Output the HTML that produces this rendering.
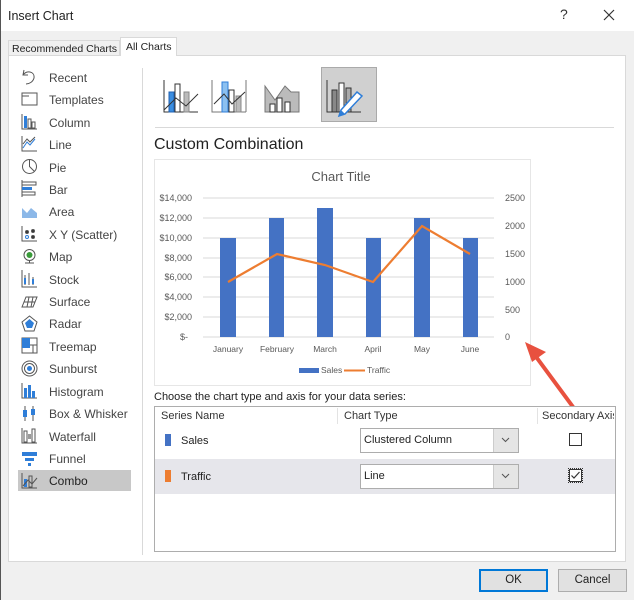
<!DOCTYPE html>
<html><head><style>
*{box-sizing:border-box;margin:0;padding:0}
body{width:634px;height:600px;overflow:hidden;font-family:"Liberation Sans",sans-serif;background:#f0f0f0;position:relative;color:#222}
.a{position:absolute;white-space:nowrap}
.t{font-size:12px}
</style></head><body>
<div class="a" style="left:0;top:0;width:634px;height:31px;background:#fff"></div>
<div class="a t" style="left:8px;top:9px;font-size:12.5px">Insert Chart</div>
<div class="a" style="left:560px;top:6px;font-size:14px;color:#333">?</div>
<svg class="a" style="left:603px;top:9px" width="12" height="12"><path d="M1 1L11 11M11 1L1 11" stroke="#333" stroke-width="1.2"/></svg>
<div class="a" style="left:0;top:0;width:1px;height:600px;background:#555"></div>
<!-- tabs -->
<div class="a" style="left:8px;top:40px;width:112px;height:16px;border:1px solid #d9d9d9;border-bottom:none;background:#f0f0f0;font-size:10.5px;padding:2px 3px;overflow:hidden">Recommended Charts</div>
<div class="a" style="left:120px;top:37px;width:57px;height:19px;border:1px solid #d9d9d9;border-bottom:none;background:#fff;font-size:10.5px;padding:3px 5px;overflow:hidden">All Charts</div>
<div class="a" style="left:8px;top:55px;width:618px;height:507px;background:#fff;border:1px solid #d9d9d9"></div>
<div class="a" style="left:121px;top:55px;width:55px;height:2px;background:#fff"></div>
<!-- left list -->
<div class="a" style="left:18px;top:470px;width:113px;height:21px;background:#c8c8c8"></div>
<div class="a" style="left:142px;top:68px;width:1px;height:487px;background:#d9d9d9"></div>
<div class="a" style="left:49px;top:67px;font-size:12px;line-height:22.4px;color:#444">
Recent<br>Templates<br>Column<br>Line<br>Pie<br>Bar<br>Area<br>X Y (Scatter)<br>Map<br>Stock<br>Surface<br>Radar<br>Treemap<br>Sunburst<br>Histogram<br>Box &amp; Whisker<br>Waterfall<br>Funnel<br><span style="color:#222">Combo</span></div>
<svg class="a" style="left:20px;top:67px" width="20" height="424" fill="none" stroke="#555" stroke-width="1">
<path d="M4 3L3 8L8 8M3 8C6 3 15 4 14 11C13 15 9 17 6 17"/>
<rect x="2" y="26" width="15" height="12"/><path d="M2 29H9"/>
<g transform="translate(0,45)"><path d="M2 2V17H17"/><rect x="4" y="4" width="3" height="12" fill="#2f7ed8" stroke="none"/><rect x="8" y="7" width="3" height="9"/><rect x="12" y="10" width="3" height="6"/></g>
<g transform="translate(0,67)"><path d="M2 2V17H17"/><path d="M3 14L7 8L10 11L15 5" stroke="#2f7ed8"/><path d="M3 10L7 5L10 8L15 3"/></g>
<g transform="translate(0,90)"><circle cx="9.5" cy="9.5" r="7"/><path d="M9.5 2.5V9.5L14.5 14.5"/></g>
<g transform="translate(0,112)"><path d="M2 1V18"/><rect x="2" y="3" width="14" height="3"/><rect x="2" y="8" width="10" height="3" fill="#2f7ed8" stroke="none"/><rect x="2" y="13" width="13" height="3"/></g>
<g transform="translate(0,135)"><path d="M2 6L7 11L11 6L17 11V16H2Z" fill="#8cb8e8" stroke="none"/></g>
<g transform="translate(0,157)"><path d="M2 2V17H17" stroke="#555"/><circle cx="7" cy="8" r="1.5" fill="#333"/><circle cx="13" cy="7" r="1.5" fill="#333"/><circle cx="7" cy="13" r="1.5" stroke="#2f7ed8"/><circle cx="13" cy="13" r="1.5" fill="#333"/></g>
<g transform="translate(0,180)"><circle cx="9.5" cy="8" r="5.5"/><circle cx="9.5" cy="8" r="3" fill="#3a9b3a" stroke="none"/><path d="M5 16H14M9.5 14V16"/></g>
<g transform="translate(0,202)"><path d="M2 1V18H17M5 6V16M9 4V16M13 8V16"/><rect x="4" y="9" width="2" height="6" fill="#2f7ed8" stroke="none"/><rect x="12" y="10" width="2" height="5" fill="#2f7ed8" stroke="none"/></g>
<g transform="translate(0,224)"><path d="M2 16L6 6H17L13 16Z M4 11H15 M9 6L7 16 M13 6L11 16"/></g>
<g transform="translate(0,247)"><path d="M9.5 2L17 8L14 17H5L2 8Z" /><path d="M9.5 5L14 9L12 14H7L5 9Z" fill="#2f7ed8" stroke="none"/></g>
<g transform="translate(0,269)"><rect x="2" y="2" width="15" height="15"/><rect x="2" y="2" width="8" height="10" fill="#2f7ed8" stroke="none"/><path d="M10 9H17M13 9V17"/></g>
<g transform="translate(0,292)"><circle cx="9.5" cy="9.5" r="7.5"/><circle cx="9.5" cy="9.5" r="5"/><circle cx="9.5" cy="9.5" r="2.5" fill="#2f7ed8" stroke="none"/></g>
<g transform="translate(0,314)"><path d="M2 2V17H17"/><rect x="4" y="7" width="3" height="10" fill="#2f7ed8" stroke="none"/><rect x="8" y="4" width="3" height="13" fill="#2f7ed8" stroke="none"/><rect x="12" y="10" width="3" height="7" fill="#2f7ed8" stroke="none"/></g>
<g transform="translate(0,337)"><path d="M5 2V17M13 2V17"/><rect x="3" y="6" width="4" height="7" fill="#2f7ed8" stroke="none"/><rect x="11" y="5" width="4" height="6" fill="#2f7ed8" stroke="none"/></g>
<g transform="translate(0,359)"><path d="M2 2V17H17"/><rect x="4" y="5" width="3" height="11"/><rect x="8" y="8" width="3" height="5" fill="#999" stroke="none"/><rect x="12" y="3" width="3" height="13"/></g>
<g transform="translate(0,382)"><path d="M2 3H17V7H2Z M5 9H14V12H5Z M8 14H11V17H8Z" fill="#2f7ed8" stroke="none"/></g>
<g transform="translate(0,404)"><path d="M2 2V17H17"/><rect x="4" y="8" width="3" height="8" fill="#2f7ed8" stroke="none"/><rect x="9" y="5" width="3" height="11"/><path d="M3 15L8 9L12 13L17 7"/></g>
</svg>
<!-- chart type icons -->
<div class="a" style="left:321px;top:67px;width:56px;height:55px;background:#d0d0d0;border:1px solid #aaa"></div>
<svg class="a" style="left:155px;top:70px" width="225" height="50" fill="none" stroke="#333" stroke-width="1">
<g transform="translate(9,10)"><path d="M0 0V32H34"/><rect x="5" y="12" width="5" height="20" fill="#3a8de0" stroke="#2060b0"/><rect x="11" y="4" width="5" height="28"/><rect x="20" y="12" width="5" height="20" fill="#bbb" stroke="#888"/><path d="M0 30L12 18L22 26L34 14"/></g>
<g transform="translate(57,10)"><path d="M0 0V32H34M34 0V32" stroke="#777"/><rect x="10" y="2" width="6" height="30" fill="#8cc0f0" stroke="#2f7ed8"/><rect x="17" y="10" width="5" height="22"/><rect x="24" y="16" width="5" height="16" fill="#bbb" stroke="#888"/><path d="M2 24L12 14L20 24L33 12"/></g>
<g transform="translate(110,10)"><path d="M0 6L10 20L20 6L26 12H34V32H0Z" fill="#bbb" stroke="#777"/><rect x="5" y="24" width="5" height="8" fill="#fff"/><rect x="12" y="18" width="5" height="14" fill="#fff"/><rect x="20" y="22" width="5" height="10" fill="#fff"/></g>
<g transform="translate(172,10)"><path d="M0 0V32H34"/><rect x="5" y="10" width="5" height="22" fill="#888"/><rect x="12" y="3" width="5" height="29" fill="#fff"/><rect x="19" y="8" width="5" height="24" fill="#aaa"/><path d="M14 30L30 12L35 16L18 34L12 36Z" fill="#fff" stroke="#2f7ed8" stroke-width="1.5"/><path d="M12 36L14 30L18 34Z" fill="#2f7ed8" stroke="none"/></g>
</svg>
<div class="a" style="left:155px;top:127px;width:459px;height:1px;background:#d9d9d9"></div>
<div class="a" style="left:154px;top:136px;font-size:16px;color:#222">Custom Combination</div>
<!-- chart -->
<div class="a" style="left:154px;top:159px;width:377px;height:227px;border:1px solid #e6e6e6;background:#fff"></div>
<svg class="a" style="left:154px;top:159px" width="377" height="227" font-family="Liberation Sans,sans-serif" font-size="9" fill="#595959">
<text x="187" y="22" font-size="13" text-anchor="middle">Chart Title</text>
<g stroke="#d9d9d9" stroke-width="1">
<path d="M49 39H340M49 59H340M49 79H340M49 99H340M49 118H340M49 138H340M49 158H340M49 178H340"/></g>
<g text-anchor="end"><text x="38" y="42">$14,000</text><text x="38" y="62">$12,000</text><text x="38" y="82">$10,000</text><text x="38" y="102">$8,000</text><text x="38" y="121">$6,000</text><text x="38" y="141">$4,000</text><text x="38" y="161">$2,000</text><text x="34" y="181">$-</text></g>
<g><text x="351" y="42">2500</text><text x="351" y="70">2000</text><text x="351" y="98">1500</text><text x="351" y="126">1000</text><text x="351" y="154">500</text><text x="351" y="181">0</text></g>
<g fill="#4472c4"><rect x="66" y="79" width="16" height="99"/><rect x="115" y="59" width="15" height="119"/><rect x="163" y="49" width="16" height="129"/><rect x="212" y="79" width="15" height="99"/><rect x="260" y="59" width="16" height="119"/><rect x="309" y="79" width="15" height="99"/></g>
<path d="M74 123L123 95L171 106L219 123L268 67L316 95" fill="none" stroke="#ed7d31" stroke-width="2.2"/>
<g text-anchor="middle" font-size="8.5"><text x="74" y="193">January</text><text x="123" y="193">February</text><text x="171" y="193">March</text><text x="219" y="193">April</text><text x="268" y="193">May</text><text x="316" y="193">June</text></g>
<rect x="145" y="209" width="20" height="5" fill="#4472c4"/><text x="167" y="214" font-size="8.5">Sales</text>
<path d="M190 211.5H211" stroke="#ed7d31" stroke-width="2"/><text x="213" y="214" font-size="8.5">Traffic</text>
</svg>
<!-- arrow -->
<svg class="a" style="left:510px;top:330px" width="90" height="110"><path d="M80 100L24 24" stroke="#e8513f" stroke-width="4" stroke-linecap="round"/><path d="M15 12L36 22L22 32Z" fill="#e8513f"/></svg>
<!-- table -->
<div class="a t" style="left:154px;top:391px;font-size:11px;color:#222">Choose the chart type and axis for your data series:</div>
<div class="a" style="left:154px;top:406px;width:462px;height:146px;border:1px solid #adadad;background:#fff"></div>
<div class="a" style="left:155px;top:459px;width:460px;height:35px;background:#e6e6eb"></div>
<div class="a" style="left:337px;top:408px;width:1px;height:16px;background:#e3e3e3"></div>
<div class="a" style="left:537px;top:408px;width:1px;height:16px;background:#e3e3e3"></div>
<div class="a" style="left:161px;top:410px;font-size:11px;color:#333">Series Name</div>
<div class="a" style="left:344px;top:410px;font-size:11px;color:#333">Chart Type</div>
<div class="a" style="left:542px;top:410px;font-size:11px;color:#333;width:72px;overflow:hidden">Secondary Axis</div>
<div class="a" style="left:165px;top:434px;width:6px;height:12px;background:#4472c4"></div>
<div class="a" style="left:181px;top:435px;font-size:11px">Sales</div>
<div class="a" style="left:165px;top:470px;width:6px;height:12px;background:#ed7d31"></div>
<div class="a" style="left:181px;top:471px;font-size:11px">Traffic</div>
<div class="a" style="left:360px;top:428px;width:159px;height:25px;border:1px solid #adadad;background:#fff;font-size:11px;padding:5px 3px">Clustered Column</div>
<div class="a" style="left:493px;top:429px;width:25px;height:23px;background:#e5e5e5;border-left:1px solid #ccc"></div>
<svg class="a" style="left:501px;top:437px" width="9" height="6"><path d="M1 1L4.5 4.5L8 1" stroke="#555" fill="none"/></svg>
<div class="a" style="left:360px;top:464px;width:159px;height:25px;border:1px solid #adadad;background:#fff;font-size:11px;padding:5px 3px">Line</div>
<div class="a" style="left:493px;top:465px;width:25px;height:23px;background:#e5e5e5;border-left:1px solid #ccc"></div>
<svg class="a" style="left:501px;top:473px" width="9" height="6"><path d="M1 1L4.5 4.5L8 1" stroke="#555" fill="none"/></svg>
<div class="a" style="left:569px;top:433px;width:13px;height:13px;border:1px solid #333;background:#fff"></div>
<div class="a" style="left:568px;top:468px;width:15px;height:15px;border:1px dotted #333"></div>
<div class="a" style="left:569px;top:469px;width:13px;height:13px;border:1px solid #333;background:#fff"></div>
<svg class="a" style="left:570px;top:470px" width="11" height="11"><path d="M1.5 5.5L4 8L9.5 2" stroke="#333" fill="none" stroke-width="1.2"/></svg>
<!-- buttons -->
<div class="a" style="left:479px;top:569px;width:69px;height:23px;border:2px solid #0078d7;background:#e1e1e1;font-size:11.5px;text-align:center;line-height:19px">OK</div>
<div class="a" style="left:558px;top:569px;width:69px;height:23px;border:1px solid #adadad;background:#e1e1e1;font-size:11.5px;text-align:center;line-height:21px">Cancel</div>
</body></html>
